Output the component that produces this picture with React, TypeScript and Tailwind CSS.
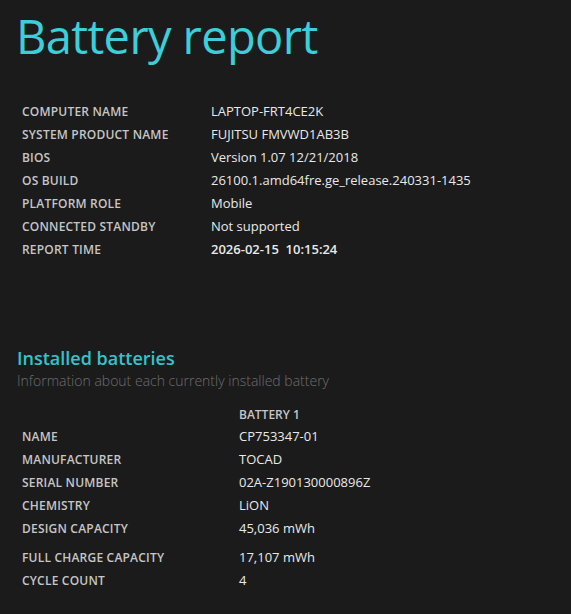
const font = { fontFamily: '"Open Sans", "Noto Sans", sans-serif' };

const systemInfo: [string, string, boolean?][] = [
  ["COMPUTER NAME", "LAPTOP-FRT4CE2K"],
  ["SYSTEM PRODUCT NAME", "FUJITSU FMVWD1AB3B"],
  ["BIOS", "Version 1.07 12/21/2018"],
  ["OS BUILD", "26100.1.amd64fre.ge_release.240331-1435"],
  ["PLATFORM ROLE", "Mobile"],
  ["CONNECTED STANDBY", "Not supported"],
  ["REPORT TIME", "2026-02-15\u00a0\u00a010:15:24", true],
];

const battery: [string, string][] = [
  ["NAME", "CP753347-01"],
  ["MANUFACTURER", "TOCAD"],
  ["SERIAL NUMBER", "02A-Z190130000896Z"],
  ["CHEMISTRY", "LiON"],
  ["DESIGN CAPACITY", "45,036 mWh"],
];

const battery2: [string, string][] = [
  ["FULL CHARGE CAPACITY", "17,107 mWh"],
  ["CYCLE COUNT", "4"],
];

const Row = ({ label, value, bold, col }: { label: string; value: string; bold?: boolean; col: string }) => (
  <div className={`grid ${col} h-[23px] items-center`}>
    <span className="text-[12px] font-semibold text-[#c6c6c6] tracking-[0.2px]">{label}</span>
    <span className={`text-[13px] text-[#e9e9e9] ${bold ? "font-semibold" : "font-normal"}`}>{value}</span>
  </div>
);

export default function App() {
  return (
    <div className="w-[571px] h-[614px] bg-[#1b1b1b] overflow-hidden" style={font}>
      <h1 className="pl-[16px] pt-[5px] text-[47px] leading-[62px] text-[#3ccfd9] tracking-[-0.6px]">
        Battery report
      </h1>

      <div className="mt-[33px] pl-[22px]">
        {systemInfo.map(([l, v, b]) => (
          <Row key={l} label={l} value={v} bold={b} col="grid-cols-[189px_1fr]" />
        ))}
      </div>

      <div className="mt-[84px] pl-[17px]">
        <h2 className="text-[18px] leading-[26px] font-semibold text-[#35c3cd]">Installed batteries</h2>
        <p className="text-[14px] leading-[20px] font-light text-[#6e6e6e]">
          Information about each currently installed battery
        </p>
      </div>

      <div className="mt-[14px] pl-[22px]">
        <div className="grid grid-cols-[217px_1fr] h-[20px] items-center">
          <span />
          <span className="text-[12px] font-semibold text-[#c6c6c6]">BATTERY 1</span>
        </div>
        <div>
          {battery.map(([l, v]) => (
            <Row key={l} label={l} value={v} col="grid-cols-[217px_1fr]" />
          ))}
        </div>
        <div className="mt-[6px]">
          {battery2.map(([l, v]) => (
            <Row key={l} label={l} value={v} col="grid-cols-[217px_1fr]" />
          ))}
        </div>
      </div>
    </div>
  );
}
